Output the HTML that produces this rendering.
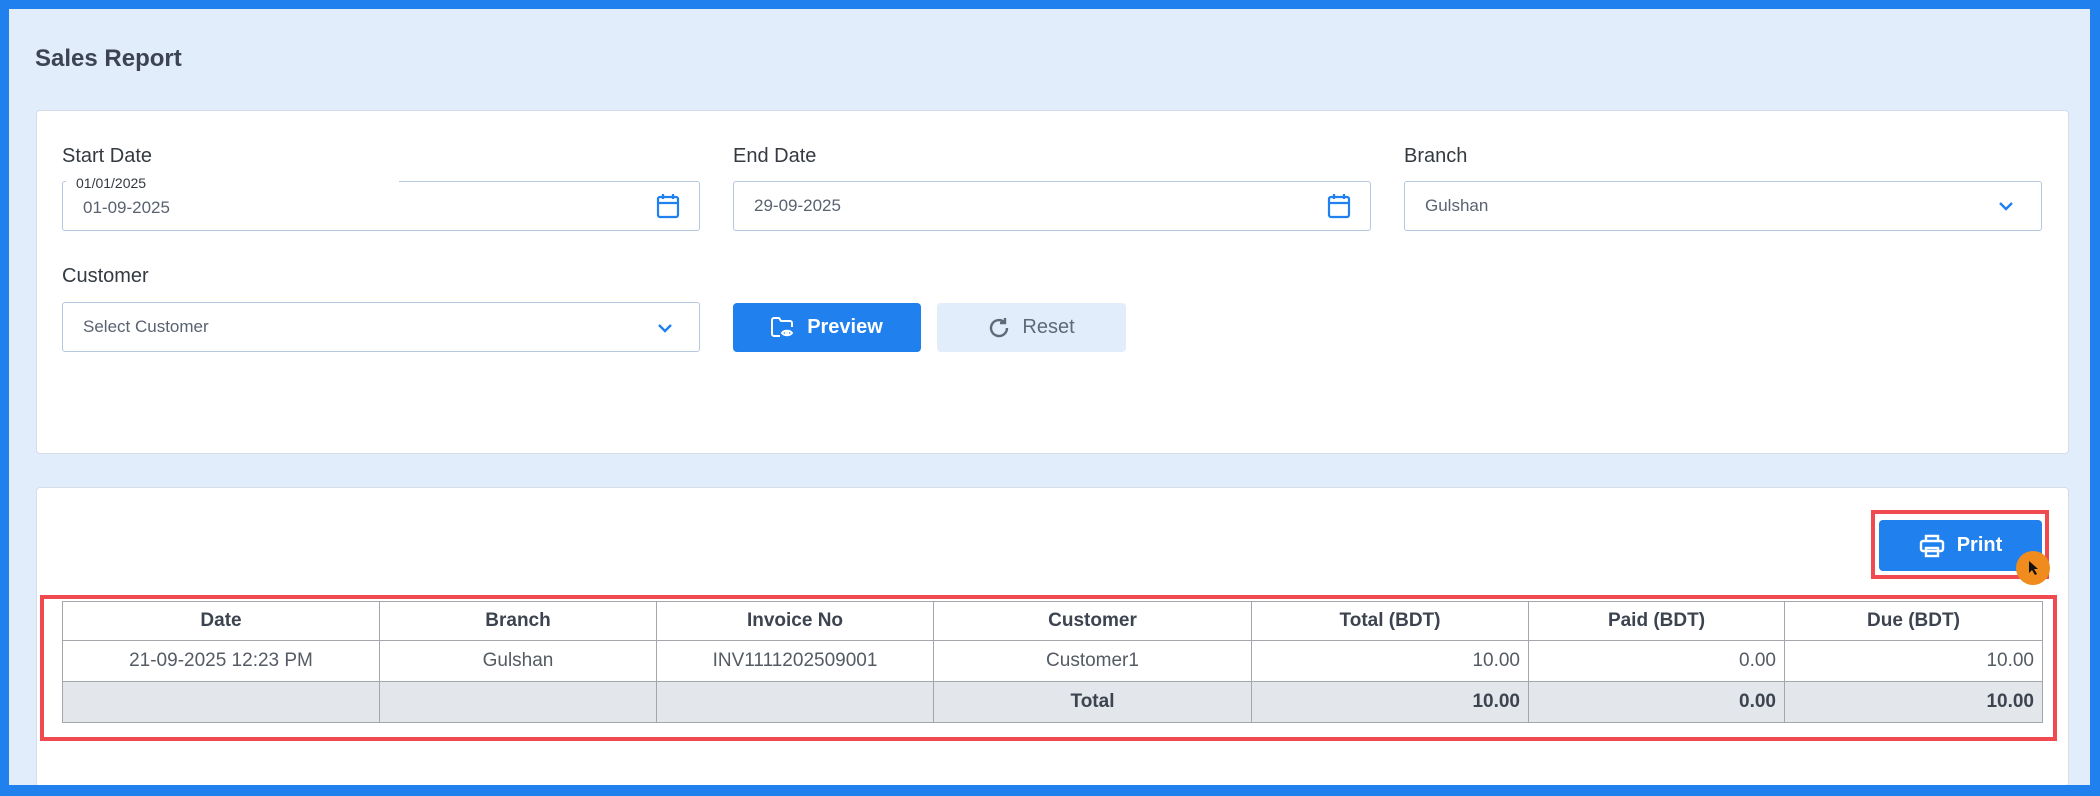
<!DOCTYPE html>
<html style="overflow:hidden;width:2100px;height:796px"><head><meta charset="utf-8"><style>
*{box-sizing:border-box;margin:0;padding:0}
body{width:2100px;height:796px;overflow:hidden;background:#e1edfb;font-family:"Liberation Sans",sans-serif;position:relative}
.frame{position:absolute;left:0;top:0;width:2100px;height:796px;border-style:solid;border-color:#1f80ee;border-width:9px 10px 11px 9px;z-index:10}
.a{position:absolute}
.title{left:35px;top:45px;font-size:24px;font-weight:bold;color:#3c4452}
.card{background:#fff;border:1px solid #d6dde6;border-radius:4px}
.lbl{font-size:20px;color:#343a40;font-weight:500}
.inp{border:1px solid #b5c8df;border-radius:3px;background:#fff;height:50px;font-size:17px;color:#5a6270;padding-left:20px;line-height:48px}
.btn{border-radius:4px;font-size:20px;font-weight:bold;display:flex;align-items:center;justify-content:center;gap:12px}
table{border-collapse:collapse;table-layout:fixed}
td,th{border:1px solid #a3a7ac;font-size:19px;color:#3d4450;height:41px;padding:0 8px}
th{font-weight:bold;height:39px}
td{color:#555b63}
.tot td{background:#e3e6eb;font-weight:bold;color:#3d4450}
.r{text-align:right}.c{text-align:center}
</style></head><body>
<div class="frame"></div>
<div class="a title">Sales Report</div>
<div class="a card" style="left:36px;top:110px;width:2033px;height:344px"></div>
<div class="a lbl" style="left:62px;top:145px">Start Date</div>
<div class="a lbl" style="left:733px;top:145px">End Date</div>
<div class="a lbl" style="left:1404px;top:145px">Branch</div>
<div class="a inp" style="left:62px;top:181px;width:638px;padding-top:2px">01-09-2025</div>
<div class="a" style="left:66px;top:176px;width:333px;height:14px;background:#fff"></div>
<div class="a" style="left:76px;top:175px;font-size:14px;color:#343a40">01/01/2025</div>
<div class="a inp" style="left:733px;top:181px;width:638px">29-09-2025</div>
<div class="a inp" style="left:1404px;top:181px;width:638px">Gulshan</div>
<svg class="a" style="left:655px;top:192px" width="26" height="28" viewBox="0 0 26 28" fill="none" stroke="#1f80ee" stroke-width="2.2"><rect x="3" y="5" width="20" height="20" rx="2"/><path d="M3 11h20M8 2v5M18 2v5"/></svg>
<svg class="a" style="left:1326px;top:192px" width="26" height="28" viewBox="0 0 26 28" fill="none" stroke="#1f80ee" stroke-width="2.2"><rect x="3" y="5" width="20" height="20" rx="2"/><path d="M3 11h20M8 2v5M18 2v5"/></svg>
<svg class="a" style="left:1998px;top:200px" width="16" height="12" viewBox="0 0 16 12" fill="none" stroke="#1f80ee" stroke-width="2.4"><path d="M2 3l6 6 6-6"/></svg>
<div class="a lbl" style="left:62px;top:265px">Customer</div>
<div class="a inp" style="left:62px;top:302px;width:638px">Select Customer</div>
<svg class="a" style="left:657px;top:322px" width="16" height="12" viewBox="0 0 16 12" fill="none" stroke="#1f80ee" stroke-width="2.4"><path d="M2 3l6 6 6-6"/></svg>
<div class="a btn" style="left:733px;top:303px;width:188px;height:49px;background:#1f80ee;color:#fff">
<svg width="24" height="22" viewBox="0 0 24 22" fill="none" stroke="#fff" stroke-width="2"><path d="M9 19H3a2 2 0 0 1-2-2V3a2 2 0 0 1 2-2h5l2 3h9a2 2 0 0 1 2 2v4"/><path d="M11 16c2-3 8-3 10 0-2 3-8 3-10 0z"/><circle cx="16" cy="16" r="1.3"/></svg>Preview</div>
<div class="a btn" style="left:937px;top:303px;width:189px;height:49px;background:#e1edfb;color:#5e6a78;font-weight:500">
<svg width="22" height="22" viewBox="0 0 22 22" fill="none" stroke="#5e6a78" stroke-width="2.4"><path d="M19 11a8 8 0 1 1-3-6.2"/><path d="M17 1v5h-5"/></svg>Reset</div>
<div class="a card" style="left:36px;top:487px;width:2033px;height:300px"></div>
<div class="a" style="left:1871px;top:510px;width:178px;height:69px;border:4px solid #f0494f"></div>
<div class="a btn" style="left:1879px;top:520px;width:163px;height:51px;background:#1f80ee;color:#fff">
<svg width="26" height="24" viewBox="0 0 26 24" fill="none" stroke="#fff" stroke-width="2.4"><path d="M7 7V2h12v5"/><rect x="2" y="7" width="22" height="10" rx="2"/><rect x="7" y="14" width="12" height="8"/></svg>Print</div>
<div class="a" style="left:2016px;top:551px;width:34px;height:34px;border-radius:50%;background:#f08c1e"></div>
<svg class="a" style="left:2028px;top:560px" width="12" height="16" viewBox="0 0 12 16"><path d="M1 1v12l3-3 3 5 2-1-3-5h4z" fill="#111"/></svg>
<div class="a" style="left:40px;top:595px;width:2017px;height:146px;border:4px solid #f0494f"></div>
<table class="a" style="left:62px;top:601px;width:1980px">
<colgroup><col style="width:317px"><col style="width:277px"><col style="width:277px"><col style="width:318px"><col style="width:277px"><col style="width:256px"><col style="width:258px"></colgroup>
<tr><th>Date</th><th>Branch</th><th>Invoice No</th><th>Customer</th><th>Total (BDT)</th><th>Paid (BDT)</th><th>Due (BDT)</th></tr>
<tr><td class="c">21-09-2025 12:23 PM</td><td class="c">Gulshan</td><td class="c">INV1111202509001</td><td class="c">Customer1</td><td class="r">10.00</td><td class="r">0.00</td><td class="r">10.00</td></tr>
<tr class="tot"><td></td><td></td><td></td><td class="c">Total</td><td class="r">10.00</td><td class="r">0.00</td><td class="r">10.00</td></tr>
</table>
</body></html>
